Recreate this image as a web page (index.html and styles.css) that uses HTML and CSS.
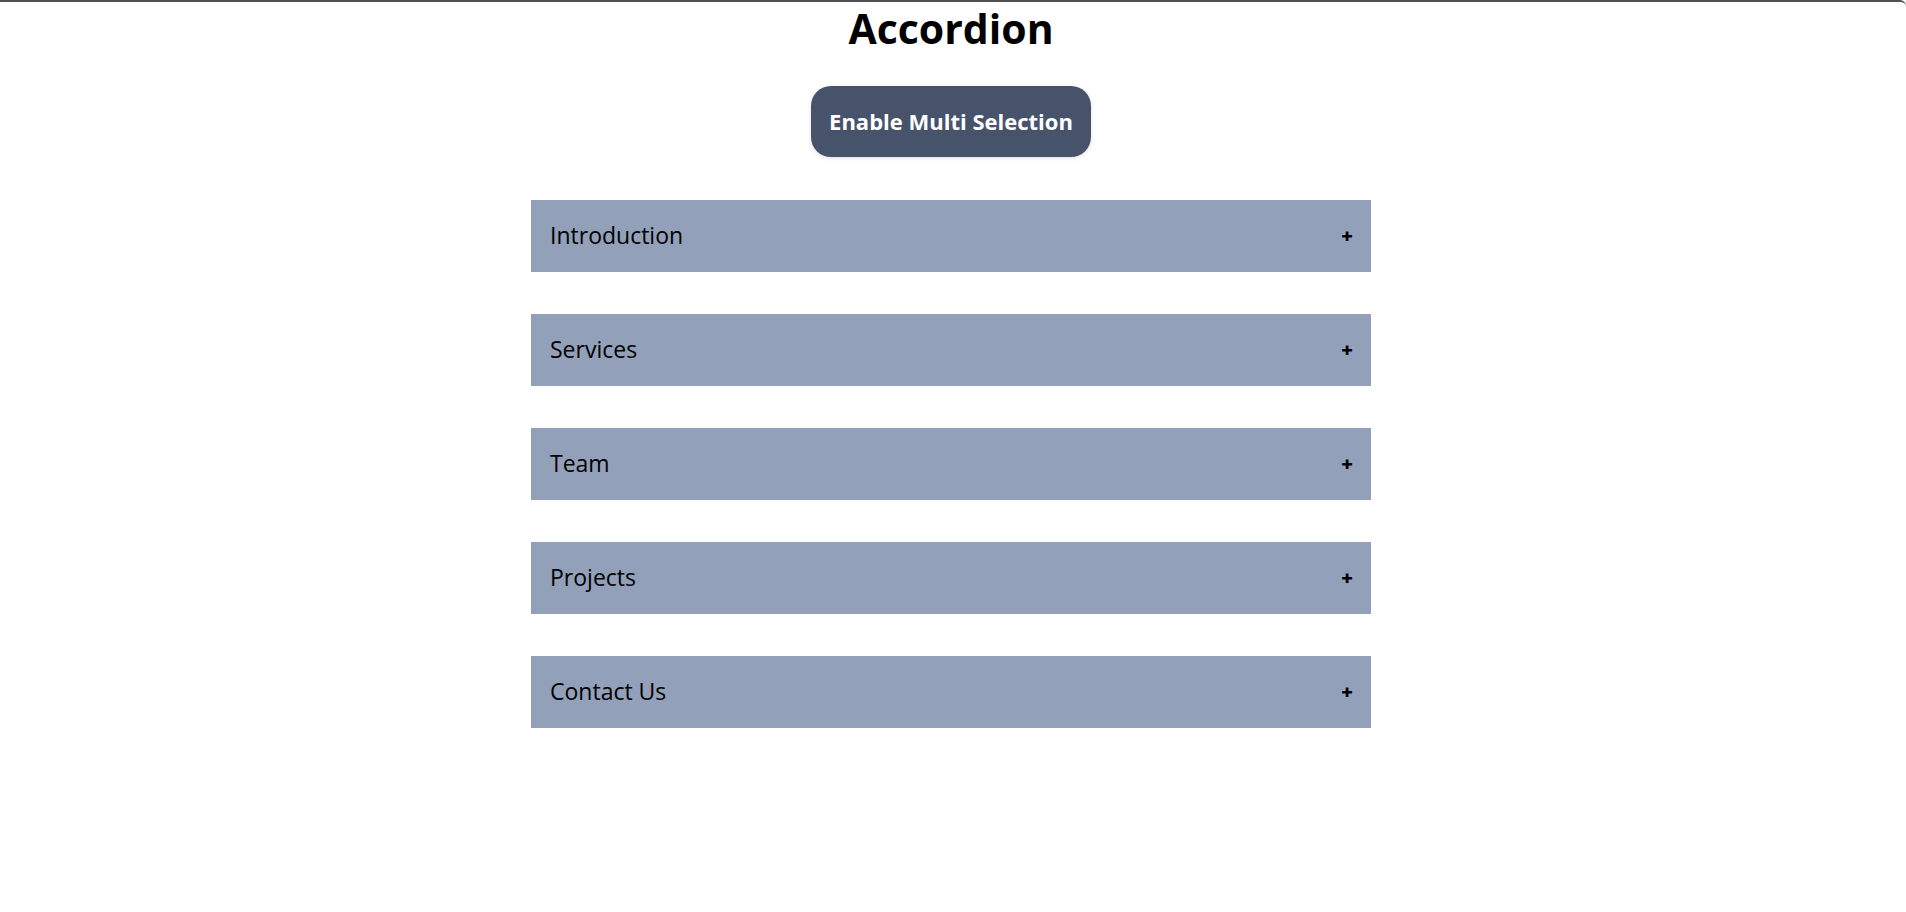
FILE: index.html
```html
<!DOCTYPE html>
<html lang="en">
<head>
<meta charset="utf-8">
<title>Accordion</title>
<link rel="stylesheet" href="styles.css">
</head>
<body>
<div class="frame">
  <h1 class="title">Accordion</h1>
  <button class="multi-btn">Enable Multi Selection</button>
  <div class="accordion">
    <div class="item"><span class="label">Introduction</span><span class="plus">+</span></div>
    <div class="item"><span class="label">Services</span><span class="plus">+</span></div>
    <div class="item"><span class="label">Team</span><span class="plus">+</span></div>
    <div class="item"><span class="label">Projects</span><span class="plus">+</span></div>
    <div class="item"><span class="label">Contact Us</span><span class="plus">+</span></div>
  </div>
</div>
</body>
</html>
```
FILE: styles.css
```css
html, body {
  margin: 0;
  padding: 0;
  background: #ffffff;
}
.frame {
  border-top: 2px solid #4f4f57;
  border-top-right-radius: 6px;
  min-height: 910px;
  display: flex;
  flex-direction: column;
  align-items: center;
  font-family: "Open Sans", "Noto Sans", sans-serif;
  padding-right: 4px;
}
.title {
  margin: 0;
  font-size: 41px;
  font-weight: 700;
  line-height: 52px;
  color: #000;
}
.multi-btn {
  margin-top: 32px;
  height: 71px;
  width: 280px;
  border: none;
  border-radius: 20px;
  background: #47526b;
  color: #fff;
  font-family: inherit;
  font-size: 22px;
  font-weight: 700;
  padding: 0 0 2px;
  box-shadow: 0 1px 4px rgba(0,0,0,0.12);
}
.accordion {
  margin-top: 43px;
  width: 840px;
  display: flex;
  flex-direction: column;
  gap: 42px;
}
.item {
  height: 72px;
  background: #92a0b9;
  display: flex;
  align-items: center;
  justify-content: space-between;
  padding: 0 18px 2px 19px;
  box-sizing: border-box;
  color: #000;
}
.label {
  font-size: 23px;
}
.plus {
  font-size: 20px;
  font-weight: 800;
}
```
